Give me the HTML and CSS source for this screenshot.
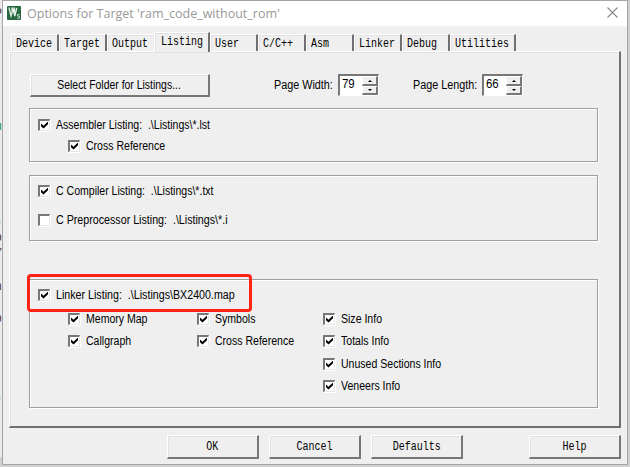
FILE: index.html
```html
<!DOCTYPE html>
<html lang="en">
<head>
<meta charset="utf-8">
<title>Options for Target</title>
<link rel="stylesheet" href="styles.css">
</head>
<body>
<div class="editor"><i class="l1">P</i><i class="l2">u</i><i class="l3">)</i><i class="l4">p</i><i class="l5">Y</i><i class="l6">n</i><i class="l7">p</i><i class="l8">)</i></div>
<main class="dialog">
  <header class="titlebar">
    <svg class="logo" width="14" height="14" viewBox="0 0 14 14"><rect width="14" height="14" rx="1" fill="#28683f"/><path d="M2 1.500l2 8.500 2-7 1.800 7 2-8M5 1.500v4M7.500 1.500v5" fill="none" stroke="#e4efe7" stroke-width="1.3"/><path d="M12.500 8.500h-2v1.700h2v2h-2.500" fill="none" stroke="#c9decf" stroke-width=".9"/></svg>
    <h1><span>Options for Target 'ram_code_without_rom'</span></h1>
    <svg class="close" width="11" height="11" viewBox="0 0 11 11"><path d="M.5.5l10 10M10.500.5l-10 10" stroke="#878787" stroke-width="1.1"/></svg>
  </header>
  <nav class="tabs">
    <div class="tab"><span>Device</span></div>
    <div class="tab"><span>Target</span></div>
    <div class="tab flat"><span>Output</span></div>
    <div class="tab active"><span>Listing</span></div>
    <div class="tab"><span>User</span></div>
    <div class="tab"><span>C/C++</span></div>
    <div class="tab"><span>Asm</span></div>
    <div class="tab"><span>Linker</span></div>
    <div class="tab"><span>Debug</span></div>
    <div class="tab wide"><span>Utilities</span></div>
  </nav>
  <section class="panel">
    <div class="top">
      <button class="btn folder"><span class="t">Select Folder for Listings...</span></button>
      <span class="t pw">Page Width:</span>
      <div class="spin"><span class="t">79</span><div class="arrows"><b class="up"></b><b class="down"></b></div></div>
      <span class="t pl">Page Length:</span>
      <div class="spin"><span class="t">66</span><div class="arrows"><b class="up"></b><b class="down"></b></div></div>
    </div>
    <div class="group asm">
      <label class="check on"><i></i><span class="t">Assembler Listing:&nbsp; .\Listings\*.lst</span></label>
      <label class="check on sub"><i></i><span class="t">Cross Reference</span></label>
    </div>
    <div class="group comp">
      <label class="check on"><i></i><span class="t">C Compiler Listing:&nbsp; .\Listings\*.txt</span></label>
      <label class="check"><i></i><span class="t roomy">C Preprocessor Listing:&nbsp; .\Listings\*.i</span></label>
    </div>
    <div class="group link">
      <div class="highlight"></div>
      <label class="check on"><i></i><span class="t roomy">Linker Listing:&nbsp; .\Listings\BX2400.map</span></label>
      <div class="cols">
        <label class="check on"><i></i><span class="t">Memory Map</span></label>
        <label class="check on"><i></i><span class="t">Symbols</span></label>
        <label class="check on"><i></i><span class="t">Size Info</span></label>
        <label class="check on"><i></i><span class="t">Callgraph</span></label>
        <label class="check on"><i></i><span class="t">Cross Reference</span></label>
        <label class="check on"><i></i><span class="t">Totals Info</span></label>
        <label class="check on c3"><i></i><span class="t">Unused Sections Info</span></label>
        <label class="check on c3"><i></i><span class="t">Veneers Info</span></label>
      </div>
    </div>
  </section>
  <footer class="actions">
    <button class="btn"><span>OK</span></button>
    <button class="btn"><span>Cancel</span></button>
    <button class="btn"><span>Defaults</span></button>
    <button class="btn help"><span>Help</span></button>
  </footer>
</main>
</body>
</html>
```
FILE: styles.css
```css
* { box-sizing: border-box; }
body { margin: 0; width: 630px; height: 467px; overflow: hidden; background: #d0d0d0; color: #000; font: 12px/14px "Liberation Sans", sans-serif; }
.editor { position: absolute; left: 0; top: 0; width: 2px; height: 457px; overflow: hidden; background: #ebebeb; }
.editor i { position: absolute; right: 0; font: 12px/14px "Liberation Mono", monospace; color: #603020; }
.l1 { top: 7px; } .editor .l2 { top: 120px; color: #2b9630; } .l3 { top: 215px; } .l4 { top: 231px; }
.l5 { top: 247px; } .l6 { top: 280px; } .l7 { top: 312px; } .l8 { top: 391px; }
.dialog { position: relative; margin-left: 2px; width: 626px; height: 465px; border: 1px solid #a5a5a5; background: #efefef; display: flex; flex-direction: column; }
.titlebar { height: 25px; flex: none; background: #fff; display: flex; align-items: center; padding: 0 9px 0 4px; }
.logo { margin-right: 6px; position: relative; top: -1px; }
.close { position: relative; top: -1px; }
h1 { flex: 1; margin: 0; font: 13px/18px "Open Sans", sans-serif; color: #999; white-space: nowrap; position: relative; top: -1px; }
h1 span { display: inline-block; transform-origin: 0 50%; transform: scaleX(.963); }
.tabs { height: 25px; flex: none; display: flex; align-items: flex-end; padding-left: 8px; }
.tab { height: 17px; width: 48px; padding: 1px 0 0 4px; border: solid; border-width: 1px 2px 0 1px; border-color: #fff #707070 #fff #fff; box-shadow: inset 1px 1px #e2e2e2; }
.tab span, .actions span { display: inline-block; font: 12px/15px "Liberation Mono", monospace; transform: scaleX(.8333); transform-origin: 0 50%; white-space: nowrap; }
.tab.flat { width: 47px; border-right: 0; }
.tab.active { position: relative; height: 20px; width: 56px; padding-left: 6px; margin-bottom: -1px; background: #efefef; z-index: 1; }
.tab.wide { width: 66px; }
.panel { margin: 0 6px 0 6px; height: 377px; flex: none; border: solid; border-width: 1px 2px 2px 1px; border-color: #fff #707070 #707070 #fff; box-shadow: inset 1px 1px #e2e2e2; padding: 22px 21px 0 19px; }
.t { white-space: nowrap; display: inline-block; transform-origin: 0 50%; transform: scaleX(.878); }
.t.roomy { transform: scaleX(.89); }
.top { display: flex; height: 24px; }
.btn { font: inherit; color: #000; border-radius: 0; background: #efefef; padding: 0; border: solid; border-width: 1px 2px 2px 1px; border-color: #fff #777 #777 #fff; box-shadow: inset 1px 1px #e2e2e2; text-align: center; }
.btn span { transform-origin: 50% 50%; }
.folder { width: 180px; height: 23px; margin-left: 1px; }
.folder .t { transform: scaleX(.87); }
.t.pw, .t.pl { margin-top: 4px; width: 64px; transform: scaleX(.9); }
.t.pw { margin-left: 64px; }
.t.pl { margin-left: 34px; width: 69px; }
.spin { width: 41px; height: 22px; background: #fff; border: solid; border-width: 2px 1px 1px 2px; border-color: #777 #fff #fff #777; display: flex; justify-content: space-between; padding-left: 2px; }
.spin .t { margin-top: 1px; transform: scaleX(.95); }
.arrows { width: 16px; background: #efefef; }
.arrows b { display: flex; height: 10px; border: solid; border-width: 1px 2px 2px 1px; border-color: #fff #777 #777 #fff; align-items: center; justify-content: center; }
.arrows .down { height: 9px; }
.arrows b::after { content: ""; border: 2px solid transparent; border-top: 0; border-bottom: 2px solid #000; }
.arrows .down::after { border-top: 2px solid #000; border-bottom: 0; }
.group { border: 1px solid #9f9f9f; box-shadow: 1px 1px #fff, inset 1px 1px #fff; width: 569px; padding-left: 8px; }
.asm { height: 54px; margin-top: 10px; padding-top: 8px; }
.comp { height: 66px; margin-top: 13px; padding-top: 7px; }
.comp .check + .check { margin-top: 14px; }
.link { position: relative; height: 129px; margin-top: 38px; padding-top: 7px; }
.highlight { position: absolute; left: -3px; top: -6px; width: 225px; height: 38px; border: 3px solid #ff2416; border-radius: 4px; }
.check { display: flex; align-items: center; height: 15px; }
.check i { width: 12px; height: 12px; margin-right: 6px; border: solid; border-width: 2px 1px 1px 2px; border-color: #777 #e6e6e6 #e6e6e6 #777; background: #fff; box-shadow: 1px 1px #fff; flex: none; }
.check.on i::after { content: ""; display: block; width: 7px; height: 7px; margin: 1px; background: #000; clip-path: polygon(0 28%, 36% 62%, 100% 0, 100% 40%, 36% 100%, 0 68%); }
.sub { margin: 6px 0 0 30px; }
.cols { margin: 9px 0 0 30px; display: grid; grid-template-columns: 129px 126px 150px; grid-template-rows: 22px 23px 22px 20px; }
.c3 { grid-column: 3; }
.actions { display: flex; padding: 7px 6px 0 164px; gap: 10px; }
.actions .btn { width: 92px; height: 24px; }
.actions .help { margin-left: auto; }
```
